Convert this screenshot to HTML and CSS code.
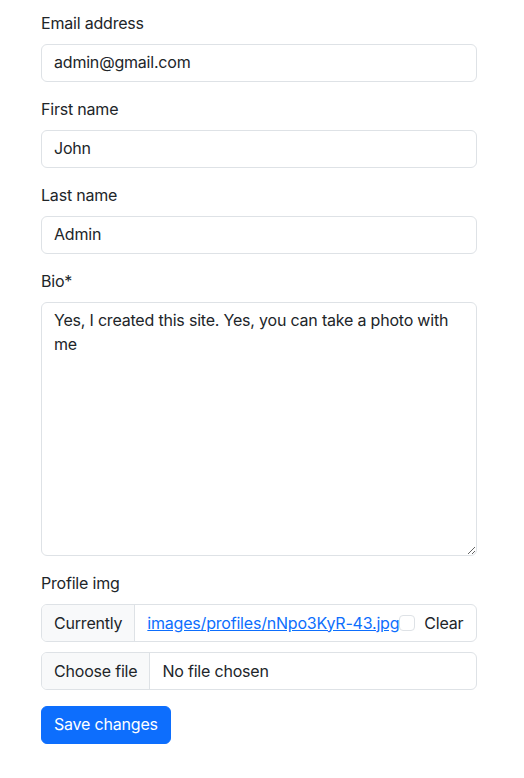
FILE: index.html
```html
<!DOCTYPE html>
<html>
<head>
<meta charset="utf-8">
<link rel="stylesheet" href="styles.css">
</head>
<body>
<form class="form">
  <div class="group">
    <label class="label">Email address</label>
    <div class="input">admin@gmail.com</div>
  </div>
  <div class="group">
    <label class="label">First name</label>
    <div class="input">John</div>
  </div>
  <div class="group">
    <label class="label">Last name</label>
    <div class="input">Admin</div>
  </div>
  <div class="group">
    <label class="label">Bio*</label>
    <textarea class="textarea">Yes, I created this site. Yes, you can take a photo with me</textarea>
  </div>
  <div class="group">
    <label class="label">Profile img</label>
    <div class="igroup">
      <span class="addon">Currently</span>
      <span class="current"><a class="link" href="#">images/profiles/nNpo3KyR-43.jpg</a><span class="check"></span><span class="clear">Clear</span></span>
    </div>
    <div class="igroup second">
      <span class="addon">Choose file</span>
      <span class="filetext">No file chosen</span>
    </div>
  </div>
  <button type="button" class="btn">Save changes</button>
</form>
</body>
</html>
```
FILE: styles.css
```css
* { box-sizing: border-box; }
body {
  margin: 0;
  padding: 12px 47px 0 41px;
  font-family: Inter, "Noto Sans", sans-serif;
  font-size: 16px;
  line-height: 24px;
  letter-spacing: -0.2px;
  color: #212529;
  background: #fff;
}
.form { display: flex; flex-direction: column; width: 436px; }
.group { display: flex; flex-direction: column; margin-bottom: 16px; }
.label { display: block; margin-bottom: 8px; line-height: 22px; padding-bottom: 2px; }
.input {
  height: 38px;
  border: 1px solid #dee2e6;
  border-radius: 6px;
  padding: 5px 12px 7px;
}
.textarea {
  display: block;
  width: 100%;
  height: 254px;
  border: 1px solid #dee2e6;
  border-radius: 6px;
  padding: 5px 12px;
  font: inherit;
  letter-spacing: inherit;
  color: inherit;
  resize: vertical;
  outline: none;
}
.igroup {
  display: flex;
  height: 38px;
  border: 1px solid #dee2e6;
  border-radius: 6px;
  overflow: hidden;
}
.igroup.second { margin-top: 10px; }
.addon {
  display: flex;
  align-items: center;
  padding: 0 12px 1px;
  background: #f8f9fa;
  border-right: 1px solid #dee2e6;
}
.current {
  display: flex;
  align-items: center;
  padding: 0 12px 1px;
  flex: 1;
  white-space: nowrap;
}
.link { color: #0d6efd; text-decoration: underline; }
.check {
  width: 16px;
  height: 16px;
  border: 1px solid #dee2e6;
  border-radius: 4px;
  flex: none;
  margin-top: 1px;
}
.clear { margin-left: 9px; }
.filetext { display: flex; align-items: center; padding: 0 12px 1px; }
.btn {
  align-self: flex-start;
  height: 38px;
  padding: 5px 12px 7px;
  background: #0d6efd;
  color: #fff;
  border: 1px solid #0d6efd;
  border-radius: 6px;
  font: inherit;
  letter-spacing: inherit;
}
```
